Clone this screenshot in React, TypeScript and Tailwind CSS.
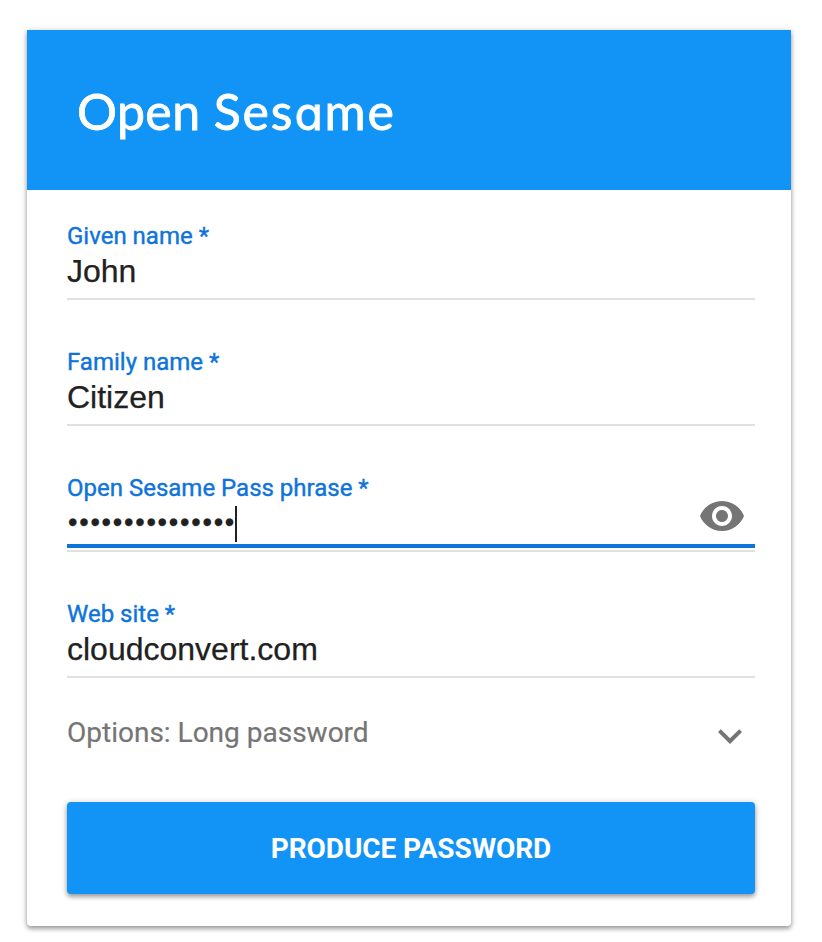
import React from 'react';

type FieldProps = {
  label: string;
  value: string;
  focused?: boolean;
};

function EyeIcon() {
  return (
    <svg viewBox="0 0 24 24" className="mr-[9px] -mt-[10px] size-12 shrink-0 fill-[#757575]">
      <path d="M12 4.5C7 4.5 2.73 7.61 1 12c1.73 4.39 6 7.5 11 7.5s9.27-3.11 11-7.5c-1.73-4.39-6-7.5-11-7.5zM12 17c-2.76 0-5-2.24-5-5s2.24-5 5-5 5 2.24 5 5-2.24 5-5 5zm0-8c-1.66 0-3 1.34-3 3s1.34 3 3 3 3-1.34 3-3-1.34-3-3-3z" />
    </svg>
  );
}

function ChevronIcon() {
  return (
    <svg viewBox="0 0 24 24" className="mr-[1px] size-12 shrink-0 fill-[#757575]">
      <path d="M16.59 8.59L12 13.17 7.41 8.59 6 10l6 6 6-6z" />
    </svg>
  );
}

function Field({ label, value, focused = false }: FieldProps) {
  return (
    <div className="h-[78px] border-b-2 border-[#e0e0e0]">
      <div className="h-7 text-[24px] leading-7 text-[#0f74d9] [-webkit-text-stroke:0.4px_#0f74d9]">{label}</div>
      <div
        className={
          focused
            ? 'flex h-[46px] items-start justify-between border-b-4 border-[#0f74d9]'
            : 'flex h-[46px] items-start'
        }
      >
        <div className="flex items-start font-['Liberation_Sans',Arial,sans-serif] text-[32px] leading-[42px] text-[#212121] [-webkit-text-stroke:0.25px_#212121]">
          {focused ? (
            <>
              <span className="w-[168px] pl-[1px] text-[27px] leading-[41px] tracking-[1.75px] whitespace-nowrap">{value}</span>
              <span className="mt-1 h-9 w-[2px] bg-[#212121]" />
            </>
          ) : (
            <span>{value}</span>
          )}
        </div>
        {focused && <EyeIcon />}
      </div>
    </div>
  );
}

export default function App() {
  return (
    <main className="h-[942px] w-[822px] bg-white pt-[30px] pl-[27px] font-['Roboto',sans-serif]">
      <section className="h-[896px] w-[764px] rounded-b-[4px] bg-white shadow-[0_3px_4px_rgba(0,0,0,0.28),0_1px_6px_rgba(0,0,0,0.22)]">
        <header className="flex h-[160px] items-center bg-[#1293f6] pt-[4px] pl-[50px]">
          <h1 className="font-['Lato',sans-serif] text-[50px] leading-[60px] tracking-[1.9px] text-white [-webkit-text-stroke:0.8px_white]">
            <span className="tracking-[0.4px]">Open </span>
            Ses
            <span className="font-['Inter',sans-serif] text-[46px] [font-feature-settings:'cv11']">a</span>
            me
          </h1>
        </header>
        <div className="px-[40px] pt-8 pr-9">
          <div className="flex flex-col gap-12">
            <Field label="Given name *" value="John" />
            <Field label="Family name *" value="Citizen" />
            <Field label="Open Sesame Pass phrase *" value="•••••••••••••••" focused />
            <Field label="Web site *" value="cloudconvert.com" />
          </div>
          <div className="mt-[34px] flex h-12 justify-between text-[28px] leading-[42px] text-[#757575] [-webkit-text-stroke:0.2px_#757575]">
            <span>Options: Long password</span>
            <ChevronIcon />
          </div>
          <button className="mt-[42px] flex h-[92px] w-full items-center justify-center rounded-[4px] bg-[#1293f6] pt-[2px] text-[28px] font-bold tracking-[-0.1px] text-white shadow-[0_3px_4px_rgba(0,0,0,0.28),0_1px_6px_rgba(0,0,0,0.22)]">
            PRODUCE PASSWORD
          </button>
        </div>
      </section>
    </main>
  );
}
